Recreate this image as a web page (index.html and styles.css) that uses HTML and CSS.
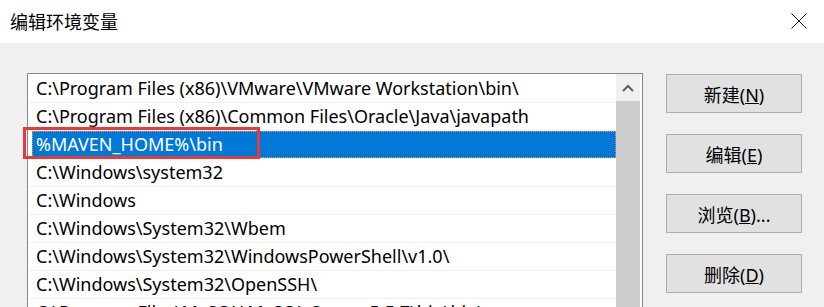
FILE: index.html
```html
<!DOCTYPE html>
<html>

<head>
    <link rel="stylesheet" href="styles.css">
</head>

<body>
    <div class="titlebar">
        <span class="title">编辑环境变量</span>
        <span class="close">
            <svg width="16" height="16" viewBox="0 0 16 16">
                <path d="M0.5 0.5 L15.5 15.5 M15.5 0.5 L0.5 15.5" stroke="#1a1a1a" stroke-width="1" fill="none"/>
            </svg>
        </span>
    </div>

    <div class="content">
        <div class="listbox">
            <div class="rows">
                <div class="row"><span class="cell">C:\Program Files (x86)\VMware\VMware Workstation\bin\</span></div>
                <div class="row"><span class="cell">C:\Program Files (x86)\Common Files\Oracle\Java\javapath</span></div>
                <div class="row selected">
                    <span class="cell">%MAVEN_HOME%\bin</span>
                    <span class="mark"></span>
                </div>
                <div class="row"><span class="cell">C:\Windows\system32</span></div>
                <div class="row"><span class="cell">C:\Windows</span></div>
                <div class="row"><span class="cell">C:\Windows\System32\Wbem</span></div>
                <div class="row"><span class="cell">C:\Windows\System32\WindowsPowerShell\v1.0\</span></div>
                <div class="row"><span class="cell">C:\Windows\System32\OpenSSH\</span></div>
                <div class="row"><span class="cell">C:\Program Files\MySQL\MySQL Server 5.5.7\bin\bin\</span></div>
            </div>
            <div class="scrollbar">
                <div class="arrow">
                    <svg width="12" height="8" viewBox="0 0 12 8">
                        <path d="M1 7 L6 2 L11 7" stroke="#606060" stroke-width="2" fill="none"/>
                    </svg>
                </div>
                <div class="thumb"></div>
            </div>
        </div>

        <div class="buttons">
            <button type="button">新建(<u>N</u>)</button>
            <button type="button">编辑(<u>E</u>)</button>
            <button type="button">浏览(<u>B</u>)...</button>
            <button type="button">删除(<u>D</u>)</button>
        </div>
    </div>
</body>

</html>
```

FILE: styles.css
```css
body {
    margin: 0;
    padding: 0;
    background-color: #f0f0f0;
    font-family: "Noto Sans", "Noto Sans CJK SC", sans-serif;
    color: #000;
    height: 307px;
    overflow: hidden;
}

.titlebar {
    height: 43px;
    background-color: #fff;
    display: flex;
    align-items: center;
    justify-content: space-between;
    padding: 0 17px 0 10px;
}

.title {
    font-size: 18px;
    margin-top: -1px;
}

.close {
    display: flex;
    margin-top: -2px;
}

.content {
    display: flex;
    align-items: flex-start;
    gap: 23px;
    padding: 30px 0 0 27px;
}

.listbox {
    width: 612px;
    height: 260px;
    border: 1px solid #828790;
    background-color: #fff;
    display: flex;
    padding-right: 2px;
}

.rows {
    flex: 1;
    padding-top: 1px;
}

.row {
    position: relative;
    height: 27px;
    border-bottom: 1px solid #f0f0f0;
    padding-left: 4px;
    display: flex;
}

.cell {
    flex: 1;
    font-size: 18px;
    line-height: 27px;
    padding-left: 4px;
    white-space: nowrap;
}

.selected .cell {
    background-color: #0078d7;
    color: #fff;
    outline: 1px dotted #f39a3a;
    outline-offset: -1px;
}

/* red highlight drawn over the selected entry */
.mark {
    position: absolute;
    left: -5px;
    top: -4px;
    width: 231px;
    height: 26px;
    border: 3px solid #e63a3a;
}

.scrollbar {
    width: 24px;
    display: flex;
    flex-direction: column;
    background-color: #f0f0f0;
}

.arrow {
    height: 27px;
    display: flex;
    align-items: center;
    justify-content: center;
}

.thumb {
    flex: 1;
    background-color: #cdcdcd;
}

.buttons {
    display: flex;
    flex-direction: column;
    gap: 21px;
    padding-top: 1px;
}

button {
    width: 136px;
    height: 39px;
    background-color: #e1e1e1;
    border: 1px solid #adadad;
    font-family: "Noto Sans", "Noto Sans CJK SC", sans-serif;
    font-size: 18px;
    color: #000;
    padding: 0;
}
```
